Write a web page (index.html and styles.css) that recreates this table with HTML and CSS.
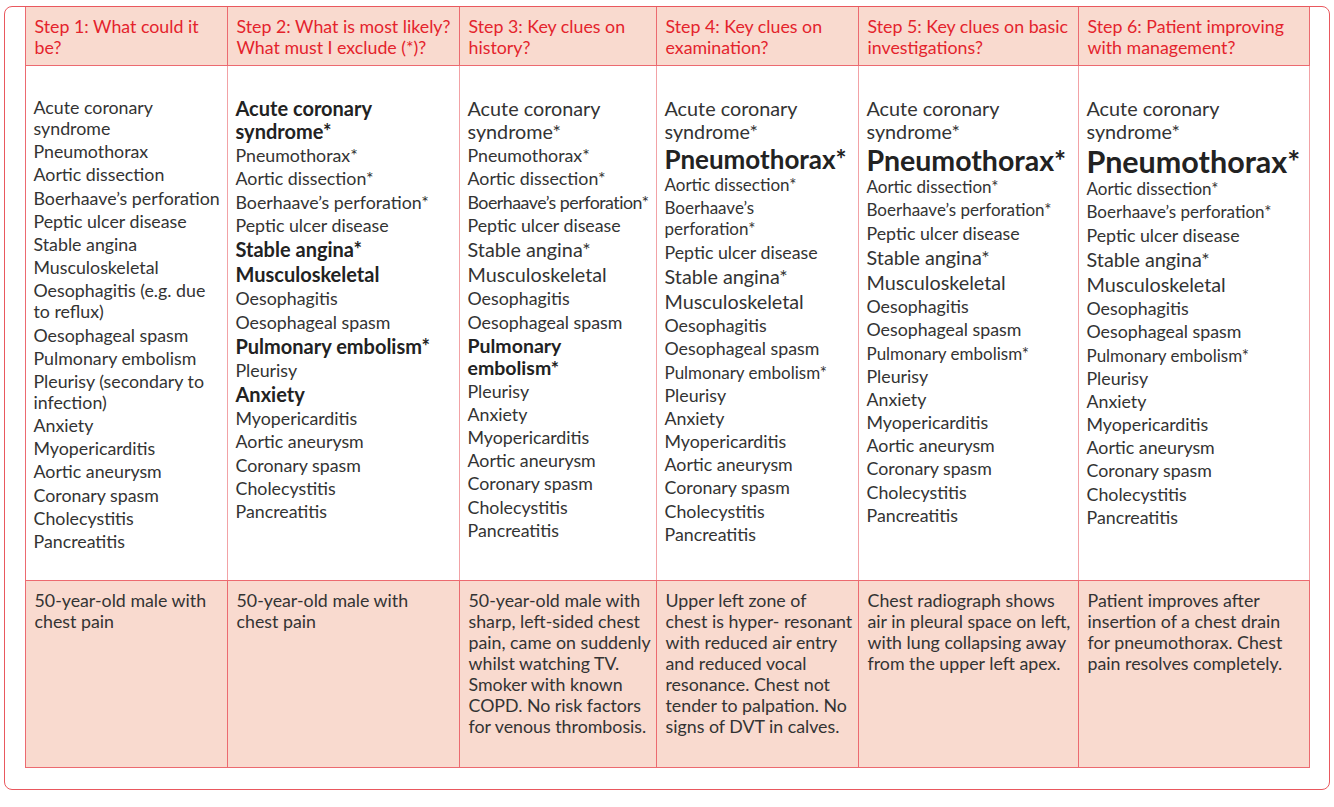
FILE: index.html
```html
<!DOCTYPE html>
<html lang="en">
<head>
<meta charset="utf-8">
<title>Chest pain: diagnostic steps</title>
<link rel="stylesheet" href="styles.css">
</head>
<body>
<div class="frame">
  <div class="table">
    <div class="cell head">Step 1: What could it<br>be?</div>
    <div class="cell head">Step 2: What is most likely?<br>What must I exclude (*)?</div>
    <div class="cell head">Step 3: Key clues on<br>history?</div>
    <div class="cell head">Step 4: Key clues on<br>examination?</div>
    <div class="cell head">Step 5: Key clues on basic<br>investigations?</div>
    <div class="cell head">Step 6: Patient improving<br>with management?</div>

    <div class="cell body">
      <ul class="dx">
        <li>Acute coronary<br>syndrome</li>
        <li>Pneumothorax</li>
        <li>Aortic dissection</li>
        <li>Boerhaave’s perforation</li>
        <li>Peptic ulcer disease</li>
        <li>Stable angina</li>
        <li>Musculoskeletal</li>
        <li>Oesophagitis (e.g. due<br>to reflux)</li>
        <li>Oesophageal spasm</li>
        <li>Pulmonary embolism</li>
        <li>Pleurisy (secondary to<br>infection)</li>
        <li>Anxiety</li>
        <li>Myopericarditis</li>
        <li>Aortic aneurysm</li>
        <li>Coronary spasm</li>
        <li>Cholecystitis</li>
        <li>Pancreatitis</li>
      </ul>
    </div>
    <div class="cell body">
      <ul class="dx">
        <li class="b">Acute coronary<br>syndrome*</li>
        <li>Pneumothorax*</li>
        <li>Aortic dissection*</li>
        <li>Boerhaave’s perforation*</li>
        <li>Peptic ulcer disease</li>
        <li class="b">Stable angina*</li>
        <li class="b">Musculoskeletal</li>
        <li>Oesophagitis</li>
        <li>Oesophageal spasm</li>
        <li class="b">Pulmonary embolism*</li>
        <li>Pleurisy</li>
        <li class="b">Anxiety</li>
        <li>Myopericarditis</li>
        <li>Aortic aneurysm</li>
        <li>Coronary spasm</li>
        <li>Cholecystitis</li>
        <li>Pancreatitis</li>
      </ul>
    </div>
    <div class="cell body">
      <ul class="dx">
        <li class="l">Acute coronary<br>syndrome*</li>
        <li>Pneumothorax*</li>
        <li>Aortic dissection*</li>
        <li class="cond">Boerhaave’s perforation*</li>
        <li>Peptic ulcer disease</li>
        <li class="l">Stable angina*</li>
        <li class="l">Musculoskeletal</li>
        <li>Oesophagitis</li>
        <li>Oesophageal spasm</li>
        <li class="b tight">Pulmonary<br>embolism*</li>
        <li>Pleurisy</li>
        <li>Anxiety</li>
        <li>Myopericarditis</li>
        <li>Aortic aneurysm</li>
        <li>Coronary spasm</li>
        <li>Cholecystitis</li>
        <li>Pancreatitis</li>
      </ul>
    </div>
    <div class="cell body">
      <ul class="dx">
        <li class="l">Acute coronary<br>syndrome*</li>
        <li class="big big4">Pneumothorax*</li>
        <li class="s">Aortic dissection*</li>
        <li class="s">Boerhaave’s<br>perforation*</li>
        <li>Peptic ulcer disease</li>
        <li class="l">Stable angina*</li>
        <li class="l">Musculoskeletal</li>
        <li>Oesophagitis</li>
        <li>Oesophageal spasm</li>
        <li class="s">Pulmonary embolism*</li>
        <li>Pleurisy</li>
        <li>Anxiety</li>
        <li>Myopericarditis</li>
        <li>Aortic aneurysm</li>
        <li>Coronary spasm</li>
        <li>Cholecystitis</li>
        <li>Pancreatitis</li>
      </ul>
    </div>
    <div class="cell body">
      <ul class="dx">
        <li class="l">Acute coronary<br>syndrome*</li>
        <li class="big big5">Pneumothorax*</li>
        <li class="s">Aortic dissection*</li>
        <li class="s">Boerhaave’s perforation*</li>
        <li>Peptic ulcer disease</li>
        <li class="l">Stable angina*</li>
        <li class="l">Musculoskeletal</li>
        <li>Oesophagitis</li>
        <li>Oesophageal spasm</li>
        <li class="s">Pulmonary embolism*</li>
        <li>Pleurisy</li>
        <li>Anxiety</li>
        <li>Myopericarditis</li>
        <li>Aortic aneurysm</li>
        <li>Coronary spasm</li>
        <li>Cholecystitis</li>
        <li>Pancreatitis</li>
      </ul>
    </div>
    <div class="cell body">
      <ul class="dx">
        <li class="l">Acute coronary<br>syndrome*</li>
        <li class="big big6">Pneumothorax*</li>
        <li class="s">Aortic dissection*</li>
        <li class="s">Boerhaave’s perforation*</li>
        <li>Peptic ulcer disease</li>
        <li class="l">Stable angina*</li>
        <li class="l">Musculoskeletal</li>
        <li>Oesophagitis</li>
        <li>Oesophageal spasm</li>
        <li class="s">Pulmonary embolism*</li>
        <li>Pleurisy</li>
        <li>Anxiety</li>
        <li>Myopericarditis</li>
        <li>Aortic aneurysm</li>
        <li>Coronary spasm</li>
        <li>Cholecystitis</li>
        <li>Pancreatitis</li>
      </ul>
    </div>

    <div class="cell foot">50-year-old male with<br>chest pain</div>
    <div class="cell foot">50-year-old male with<br>chest pain</div>
    <div class="cell foot">50-year-old male with<br>sharp, left-sided chest<br>pain, came on suddenly<br>whilst watching TV.<br>Smoker with known<br>COPD. No risk factors<br>for venous thrombosis.</div>
    <div class="cell foot">Upper left zone of<br>chest is hyper- resonant<br>with reduced air entry<br>and reduced vocal<br>resonance. Chest not<br>tender to palpation. No<br>signs of DVT in calves.</div>
    <div class="cell foot">Chest radiograph shows<br>air in pleural space on left,<br>with lung collapsing away<br>from the upper left apex.</div>
    <div class="cell foot">Patient improves after<br>insertion of a chest drain<br>for pneumothorax. Chest<br>pain resolves completely.</div>
  </div>
</div>
</body>
</html>
```

FILE: styles.css
```css
* { box-sizing: border-box; }

html, body {
  margin: 0;
  padding: 0;
  background: #ffffff;
}

body {
  font-family: "Lato", "Liberation Sans", sans-serif;
  color: #333333;
  width: 1334px;
  height: 807px;
  overflow: hidden;
}

.frame {
  margin: 6px 0 0 4px;
  width: 1326px;
  height: 784px;
  border: 1.5px solid #e9585e;
  border-radius: 8px;
  padding: 0 19px 22px 19.5px;
}

.table {
  display: grid;
  grid-template-columns: 202px 232px 197px 202px 220px 231px;
  grid-template-rows: 59px 514px 187px;
  border-left: 1px solid #ec6a70;
  border-bottom: 1px solid #ec6a70;
}

.cell {
  border-right: 1px solid #ec6a70;
}

.head {
  background: #f9dacf;
  color: #e4232c;
  font-size: 17.8px;
  line-height: 21px;
  padding: 9px 4px 0 9px;
  border-bottom: 1px solid #ec6a70;
  white-space: nowrap;
}

.body {
  background: #ffffff;
  border-right-color: #f2a2a6;
  padding: 31px 2px 0 8px;
}

.table .body:last-of-type { border-right-color: #ec6a70; }

.foot {
  background: #f9dacf;
  border-top: 1px solid #ec6a70;
  font-size: 17.8px;
  line-height: 21px;
  padding: 9px 2px 0 9px;
  white-space: nowrap;
}

.dx {
  list-style: none;
  margin: 0;
  padding: 0;
  font-size: 17.8px;
  white-space: nowrap;
}

.dx li {
  line-height: 21px;
  margin-bottom: 2.2px;
}

.dx li.b {
  font-weight: 700;
  font-size: 20px;
  line-height: 23px;
  color: #222222;
}

.dx li.b.tight {
  font-size: 19.5px;
  line-height: 22px;
  margin-bottom: 2px;
}

.dx li.l {
  font-size: 19.8px;
  line-height: 23px;
}

.dx li.s {
  font-size: 17px;
  line-height: 21px;
}

.dx li.cond {
  letter-spacing: -0.5px;
}

.dx li.big {
  font-weight: 700;
  color: #222222;
  margin-bottom: 1px;
}

.dx li.big4 { font-size: 26px; line-height: 28px; }
.dx li.big5 { font-size: 28.5px; line-height: 30px; }
.dx li.big6 { font-size: 30.5px; line-height: 32px; }
```
